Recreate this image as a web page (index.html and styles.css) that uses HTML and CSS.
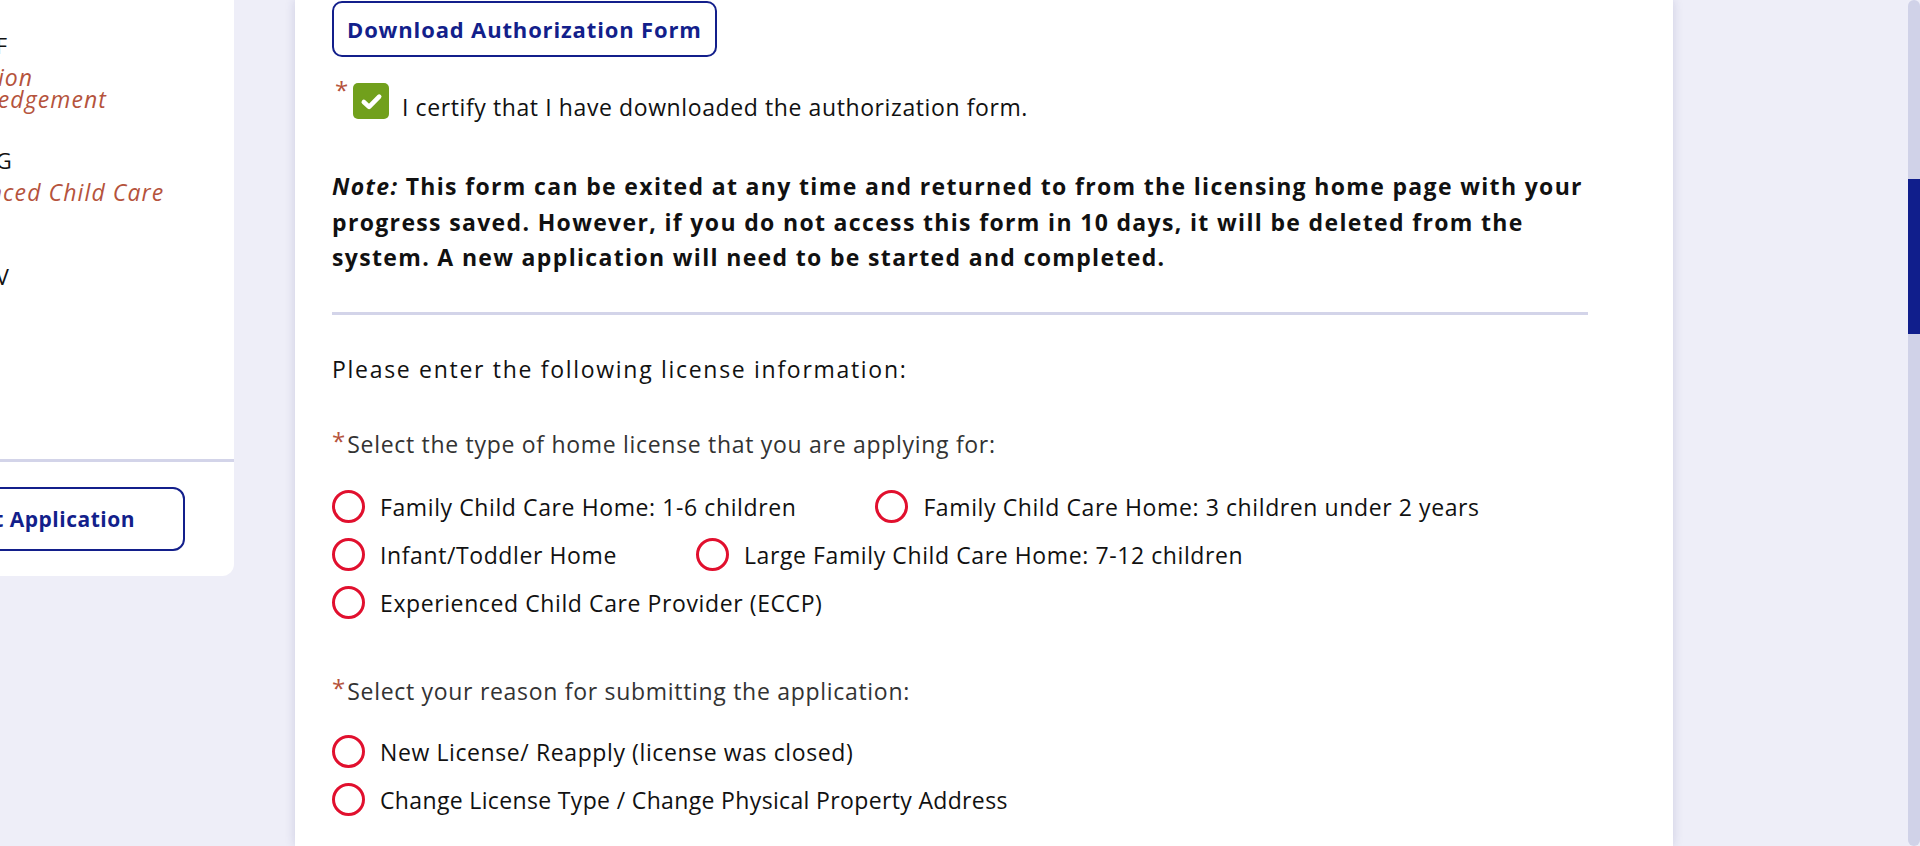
FILE: index.html
```html
<!DOCTYPE html>
<html lang="en">
<head>
<meta charset="utf-8">
<title>License Application</title>
<link rel="stylesheet" href="styles.css">
</head>
<body>
<div class="layout">
  <div class="viewport">
    <aside class="sidebar">
      <div class="steps">
        <div class="step">
          <div class="step-title">Section F</div>
          <div class="step-desc">Application<br>Acknowledgement</div>
        </div>
        <div class="step">
          <div class="step-title">Section G</div>
          <div class="step-desc">Experienced Child Care<br><span class="tight">Provider</span></div>
        </div>
        <div class="step">
          <div class="step-title">Section V</div>
          <div class="step-desc"><span class="tight">Review</span></div>
        </div>
      </div>
      <div class="sidebar-foot">
        <button class="btn btn-side" type="button">Submit Application</button>
      </div>
    </aside>

    <main class="card">
      <button class="btn btn-download" type="button">Download Authorization Form</button>

      <div class="certify">
        <span class="req">*</span>
        <span class="checkbox">
          <svg viewBox="0 0 20 20" width="27" height="27" aria-hidden="true"><path d="M4.3 10.4 L8.2 14 L15.7 6.4" fill="none" stroke="#fff" stroke-width="3.4" stroke-linecap="round" stroke-linejoin="round"/></svg>
        </span>
        <span class="certify-text">I certify that I have downloaded the authorization form.</span>
      </div>

      <p class="note"><em>Note:</em> This form can be exited at any time and returned to from the licensing home page with your progress saved. However, if you do not access this form in 10 days, it will be deleted from the system. A new application will need to be started and completed.</p>

      <hr class="divider">

      <p class="intro">Please enter the following license information:</p>

      <p class="question"><span class="req">*</span>Select the type of home license that you are applying for:</p>
      <div class="options options-type">
        <label class="option"><span class="radio"></span>Family Child Care Home: 1-6 children</label>
        <label class="option"><span class="radio"></span>Family Child Care Home: 3 children under 2 years</label>
        <label class="option"><span class="radio"></span>Infant/Toddler Home</label>
        <label class="option"><span class="radio"></span>Large Family Child Care Home: 7-12 children</label>
        <label class="option"><span class="radio"></span>Experienced Child Care Provider (ECCP)</label>
      </div>

      <p class="question question-reason"><span class="req">*</span>Select your reason for submitting the application:</p>
      <div class="options options-reason">
        <label class="option"><span class="radio"></span>New License/ Reapply (license was closed)</label>
        <label class="option option-narrow"><span class="radio"></span>Change License Type / Change Physical Property Address</label>
      </div>
    </main>
  </div>
  <div class="scrollbar"><div class="thumb"></div></div>
</div>
</body>
</html>
```

FILE: styles.css
```css
* { box-sizing: border-box; }

html, body {
  margin: 0;
  padding: 0;
  height: 100%;
}

body {
  background: #eeeef8;
  font-family: "Open Sans", "Noto Sans", sans-serif;
  color: #111;
  overflow: hidden;
}

.layout {
  display: flex;
  height: 846px;
  overflow: hidden;
}

.viewport {
  flex: 1;
  display: flex;
  align-items: flex-start;
  min-width: 0;
}

/* Sidebar */
.sidebar {
  width: 234px;
  flex: none;
  background: #fff;
  border-bottom-right-radius: 12px;
  overflow: hidden;
  display: flex;
  flex-direction: column;
}

.steps {
  height: 459px;
  padding-top: 33px;
  margin-left: -93px;
  display: flex;
  flex-direction: column;
  gap: 38px;
}

.step-title {
  font-size: 22px;
  line-height: 24px;
  color: #111;
  letter-spacing: 1px;
  white-space: nowrap;
}

.step-desc {
  margin-top: 9px;
  font-size: 23px;
  line-height: 22px;
  font-style: italic;
  color: #b5533c;
  letter-spacing: 1.1px;
  white-space: nowrap;
}

.step-desc .tight {
  letter-spacing: 0;
  font-size: 21px;
}

.sidebar-foot {
  border-top: 3px solid #d3d4e9;
  padding: 25px 49px 25px 0;
  display: flex;
  justify-content: flex-end;
}

.btn {
  font-family: "Open Sans", "Noto Sans", sans-serif;
  font-weight: 700;
  color: #131f8b;
  background: #fff;
  border: 2.5px solid #131f8b;
  cursor: pointer;
}

.btn-side {
  height: 64px;
  border-radius: 12px;
  padding: 0 48px 0 40px;
  font-size: 21px;
  letter-spacing: 0.5px;
  white-space: nowrap;
  flex: none;
}

/* Main card */
.card {
  flex: none;
  width: 1378px;
  margin-left: 61px;
  align-self: stretch;
  background: #fff;
  box-shadow: 0 0 10px rgba(40, 40, 110, 0.16);
  padding: 1px 85px 0 37px;
}

.btn-download {
  display: block;
  height: 56px;
  border-radius: 10px;
  padding: 0 13px;
  font-size: 22px;
  letter-spacing: 0.85px;
}

.req {
  color: #b5533c;
  font-size: 24px;
  line-height: 1;
}

.certify {
  margin-top: 26px;
  display: flex;
  align-items: flex-end;
}

.certify .req {
  align-self: flex-start;
  width: 21px;
  margin-top: -5px;
  padding-left: 3px;
}

.checkbox {
  width: 36px;
  height: 36px;
  border-radius: 5px;
  background: #71a01c;
  display: flex;
  align-items: center;
  justify-content: center;
  flex: none;
}

.certify-text {
  margin-left: 13px;
  font-size: 23px;
  line-height: 24px;
  letter-spacing: 0.6px;
}

.note {
  margin: 50px 0 0;
  font-size: 23px;
  line-height: 35.5px;
  font-weight: 700;
  letter-spacing: 1.34px;
}

.note em {
  font-style: italic;
}

.divider {
  margin: 36px 0 0;
  border: 0;
  height: 3px;
  background: #d3d4e9;
}

.intro {
  margin: 39px 0 0;
  font-size: 23px;
  line-height: 30px;
  letter-spacing: 1.7px;
}

.question {
  margin: 45px 0 0;
  font-size: 23px;
  line-height: 30px;
  color: #333;
  letter-spacing: 0.7px;
}

.question .req {
  display: inline-block;
  vertical-align: top;
  margin-top: 0;
  margin-right: 2px;
  letter-spacing: 0;
}

.question-reason {
  margin-top: 55px;
}

.options {
  display: flex;
  flex-wrap: wrap;
  column-gap: 79px;
  row-gap: 12px;
}

.options-type {
  margin-top: 30px;
}

.options-reason {
  margin-top: 28px;
  flex-direction: column;
  align-items: flex-start;
}

.option {
  display: flex;
  align-items: center;
  height: 36px;
  font-size: 23px;
  letter-spacing: 0.6px;
  color: #111;
  white-space: nowrap;
}

.option-narrow {
  letter-spacing: 0.35px;
}

.radio {
  width: 33px;
  height: 33px;
  border: 3px solid #e1102e;
  border-radius: 50%;
  margin-right: 15px;
  flex: none;
}

/* Fake scrollbar */
.scrollbar {
  width: 12px;
  flex: none;
  background: #d0d2e8;
  border-radius: 6px;
  padding-top: 179px;
}

.thumb {
  height: 155px;
  background: #101e8c;
}
```
